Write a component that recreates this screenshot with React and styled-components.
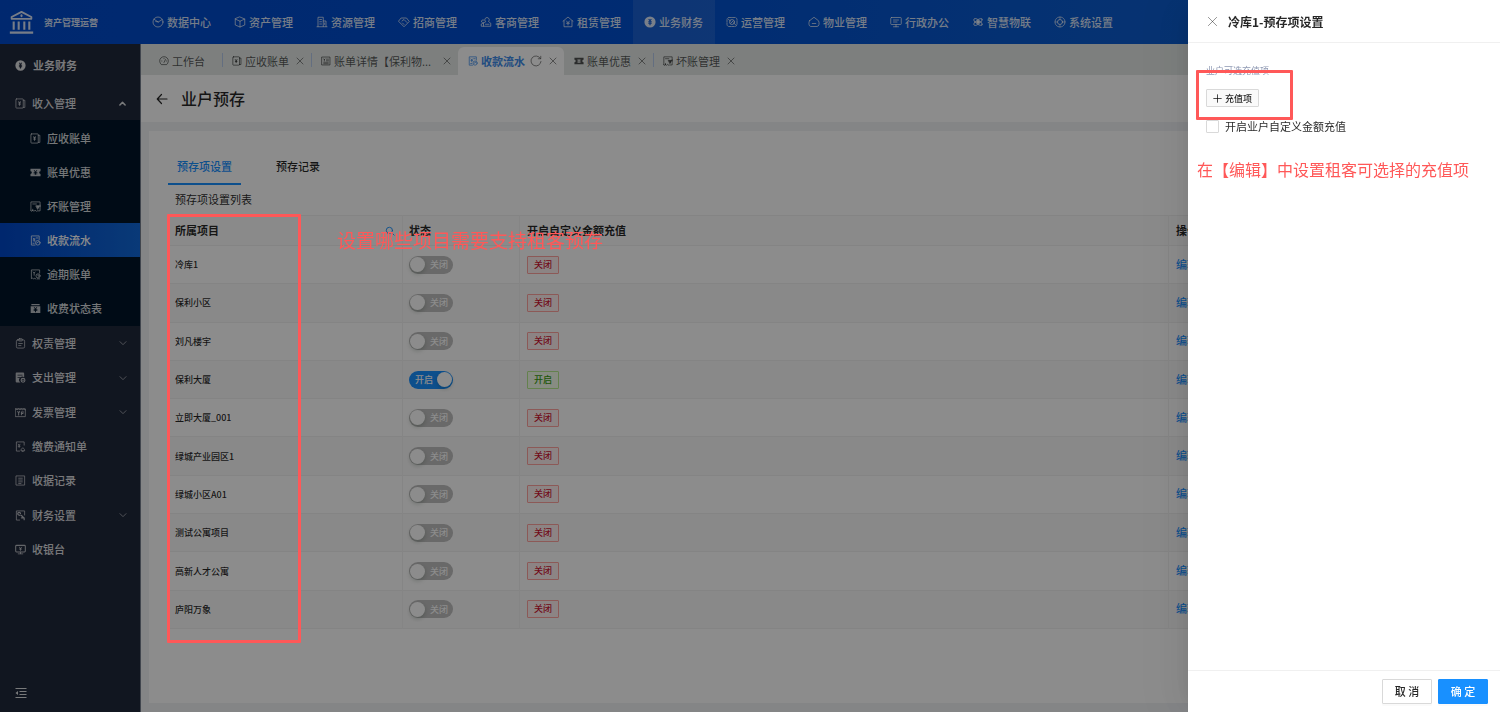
import React from 'react';
import styled, { createGlobalStyle, css } from 'styled-components';

const GlobalStyle = createGlobalStyle`
  *, *::before, *::after { box-sizing: border-box; }
  body {
    margin: 0;
    font-family: "Noto Sans CJK SC", "Noto Sans", sans-serif;
    font-size: 11px;
    line-height: 15px;
    color: rgba(0, 0, 0, 0.85);
    background: #f0f2f5;
    overflow: hidden;
  }
  button, input { font: inherit; color: inherit; margin: 0; }
  button { border: 0; padding: 0; background: none; cursor: pointer; }
  a { color: inherit; text-decoration: none; }
  ul { list-style: none; margin: 0; padding: 0; }
  h1, h2, p { margin: 0; font-weight: inherit; font-size: inherit; }
`;

/* ---------- icons ---------- */

const IconSvg = styled.svg`
  flex: none;
  display: block;
  width: ${(p) => p.$size}px;
  height: ${(p) => p.$size}px;
  fill: none;
  stroke: currentColor;
  stroke-width: ${(p) => p.$weight};
  stroke-linecap: round;
  stroke-linejoin: round;
  opacity: ${(p) => p.$opacity};
`;

const glyphs = {
  bank: (
    <>
      <path d="M2.500 8.500V6.800L12 1.800l9.500 5v1.700z" strokeWidth="1.700" />
      <path d="M12 5v1" strokeWidth="1.800" />
      <path d="M4.500 11v8M9.300 11v8M14.700 11v8M19.500 11v8" strokeWidth="2" strokeLinecap="butt" />
      <path d="M.8 21.700h22.400" strokeWidth="2.200" strokeLinecap="butt" />
    </>
  ),
  pie: (
    <>
      <circle cx="12" cy="12" r="10" />
      <path d="M4 6.500l8.500 5.500 8-5M12.500 12l-5-1" />
    </>
  ),
  cube: <path d="M12 2l9.500 4v12L12 22l-9.500-4V6zM2.500 6L12 10.500 21.500 6M12 10.500V22" />,
  building: (
    <>
      <path d="M4 21V2.500h10.500V21M14.500 10H20v11M2 21.500h20" />
      <path d="M7.500 7h3.500M7.500 11.500h3.500M7.500 16h3.500M17.300 14v3" />
    </>
  ),
  handshake: (
    <>
      <path d="M7 4h10l5.500 7L12 21.500 1.500 11z" />
      <path d="M8 10l4-3 6 6M9 14l3 3" />
    </>
  ),
  people: (
    <>
      <path d="M11 11a4.500 4.500 0 1 1 6 0l4.500 3.500v6H7v-6z" />
      <path d="M8 8.500a3 3 0 1 0-1 5L2.500 16v4.500H7M11 16.500h7" />
    </>
  ),
  rent: (
    <>
      <path d="M2 10.500L12 2l10 8.500M4 9.500V21.500h16V9.500" />
      <path d="M9 10l3 3.500 3-3.500M12 13.500V18M9 14.500h6" />
    </>
  ),
  coin: (
    <path
      fill="currentColor"
      stroke="none"
      fillRule="evenodd"
      d="M12 .8a11.200 11.200 0 1 1 0 22.400A11.200 11.200 0 0 1 12 .8zM8.500 6l2.300 4.500H8.500v2h2.300v1.200H8.500v2h2.300V18.500h2.400v-2.800h2.300v-2h-2.300v-1.200h2.300v-2h-2.300L15.500 6H13L12 8.500 11 6z"
    />
  ),
  ops: (
    <>
      <rect x="2" y="3" width="20" height="18" rx="4" strokeDasharray="5 2" />
      <circle cx="12" cy="12" r="5" />
      <path d="M5 7l4 3M19 17l-4-3M9.500 14.500l5-5" />
    </>
  ),
  house: (
    <>
      <path d="M3 9.500L12 2.500l9 7c2.500 5 1 11.500-3 11.500H6C2 21 .5 14.500 3 9.500z" />
      <path d="M8.500 15h7" />
    </>
  ),
  board: (
    <>
      <rect x="1.500" y="3" width="21" height="14" rx="1.500" />
      <path d="M7 8h10M7 12h7M12 17v4.500M7 21.500h10" />
    </>
  ),
  atom: (
    <>
      <ellipse cx="12" cy="12" rx="10" ry="4" transform="rotate(35 12 12)" />
      <ellipse cx="12" cy="12" rx="10" ry="4" transform="rotate(-35 12 12)" />
      <circle cx="12" cy="12" r="2.800" fill="currentColor" />
    </>
  ),
  gear: (
    <>
      <circle cx="12" cy="12" r="10" strokeDasharray="3.500 1.700" />
      <circle cx="12" cy="12" r="5" />
      <path d="M12 2.500V7M12 17v4.500M2.500 12H7M17 12h4.500" strokeWidth="1.200" />
    </>
  ),
  receipt: (
    <>
      <rect x="2" y="2" width="16" height="20" rx="1.500" />
      <path d="M18 5h3.500v15.500H18" />
      <path d="M8 8.500l2 2.500 2-2.500M10 11v5M8 13h4" strokeWidth="2.200" />
    </>
  ),
  ticket: (
    <path
      fill="currentColor"
      stroke="none"
      fillRule="evenodd"
      d="M1 4h22v5a3 3 0 0 0 0 6v5H1v-5a3 3 0 0 0 0-6zM8 7l2.800 4H8v1.600h3V14H8v1.600h3V17h2v-1.400h3V14h-3v-1.400h3V11h-2.800L16 7h-2l-2 3-2-3z"
    />
  ),
  bad: (
    <>
      <path d="M22 12V2H2v19M6 21v-3M2 21l2 1.500L6 20l2.500 2.500L11 20l3 2.500" />
      <path d="M22 9v12.500h-6M6 6.500h8" />
      <path d="M13.500 10.500h7l-3.500 7z" fill="currentColor" />
    </>
  ),
  flow: (
    <>
      <path d="M20 10V2H3v20h8M7 7l2 2.500L11 7M9 9.500V14M7 11h4M14 6.500h3M6.500 18H9" />
      <circle cx="17" cy="17" r="5" />
      <path d="M14.500 17.500L19 14.500" />
    </>
  ),
  overdue: (
    <>
      <path d="M21 9V2H3v19l2.500-1.500L8 22l2.500-2 2.500 2M7 6.500l2 2.500 2-2.500M9 9v4.500" />
      <circle cx="17.500" cy="15" r="4.500" />
      <path d="M17.500 13v2.500h2M16 21.500h5" />
    </>
  ),
  status: (
    <path
      fill="currentColor"
      stroke="none"
      fillRule="evenodd"
      d="M3 2h18v3H3zM1.500 7h21v15h-21zM8 9l2.700 4H8v1.500h3V16H8v1.500h3V20h2v-2.500h3V16h-3v-1.500h3V13h-2.700L16 9h-2.300L12 12l-1.700-3z"
    />
  ),
  clipboard: (
    <>
      <rect x="3" y="4" width="18" height="18" rx="3" />
      <rect x="8" y="1.500" width="8" height="5" rx="1.500" />
      <path d="M8 12h8M8 16.500h5" />
    </>
  ),
  expense: (
    <>
      <path
        fill="currentColor"
        stroke="none"
        fillRule="evenodd"
        d="M4 1h14a2 2 0 0 1 2 2v8.500a6.500 6.500 0 0 0-8 11.500H4a2.500 2.500 0 0 1-2.500-2.500V3A2 2 0 0 1 4 1zM5.500 6v1.800h11V6zM5.500 11v1.800h6V11z"
      />
      <circle cx="17.500" cy="18" r="4.200" strokeWidth="2.400" />
      <path d="M15.500 18h4" />
    </>
  ),
  invoice: (
    <>
      <path d="M1.500 4h21v17h-21zM1.500 4l3 2 3-2 3 2 3-2 3 2 3-2 3 2" />
      <path d="M6 10l2 2.500 2-2.500M8 12.500v5M14 17v-6h4.500M14 14h3.500" strokeWidth="2.200" />
    </>
  ),
  notice: (
    <>
      <path d="M20 9V2H3v20h7M7 7l2 2.500L11 7M9 9.500V14M7 11.500h4" />
      <path d="M13 20.500c0-7 8-7 8 0zM16 22.500h2" />
    </>
  ),
  record: (
    <>
      <path d="M3 2h18v20H3z" />
      <path d="M8 7h8M8 11h8M8 15h8M8 18.500h5" />
    </>
  ),
  finance: (
    <>
      <path d="M21 11V2H3v20h7" />
      <path d="M12 8a3 3 0 1 0-3 3l2 1M14 12l5 5M14 17h6v4" strokeWidth="2.600" />
    </>
  ),
  cashier: (
    <>
      <rect x="1.500" y="3" width="21" height="14.500" rx="2" strokeWidth="2.200" />
      <path d="M9.500 7l2.500 2.500L14.500 7M12 9.500V14M9.500 11h5M7 21.500h10M12 18v3" />
    </>
  ),
  bill: (
    <>
      <path d="M2.500 2.500h19v19h-19z" />
      <path d="M6.500 7l1.500 2 1.500-2M8 9v3M13 7.500h5M13 11.500h5M6.500 15h11M6.500 18.500h11" />
    </>
  ),
  dashboard: (
    <>
      <path d="M5 20a10.500 10.500 0 1 1 14 0z" />
      <path d="M12 15.500l3.500-7M6.500 12h.5M12 6v.5M17.500 12h.5" />
    </>
  ),
  close: <path d="M3 3l18 18M21 3L3 21" />,
  reload: <path d="M20.500 6.500A10 10 0 1 0 22 13M21.500 2.500v5h-5" />,
  back: <path d="M22 12H2.500M11 3L2.500 12l8.500 9" />,
  up: <path d="M5 16l7-7 7 7" />,
  down: <path d="M3 8l9 9 9-9" />,
  search: (
    <>
      <circle cx="10.500" cy="10.500" r="7.500" />
      <path d="M16 16l6 6" />
    </>
  ),
  plus: <path d="M12 2v20M2 12h20" />,
  fold: (
    <>
      <path d="M1 3h22M9 9h14M9 15h14M1 21h22" strokeLinecap="butt" />
      <path d="M1 12l5-4v8z" fill="currentColor" stroke="none" />
    </>
  ),
};

function Icon({ name, size = 11, weight = 1.8, opacity = 1 }) {
  return (
    <IconSvg viewBox="0 0 24 24" $size={size} $weight={weight} $opacity={opacity} aria-hidden="true">
      {glyphs[name]}
    </IconSvg>
  );
}

/* ---------- top bar ---------- */

const Page = styled.div`
  height: 100vh;
  display: flex;
  flex-direction: column;
`;

const TopBar = styled.header`
  flex: none;
  display: flex;
  height: 44px;
  background: linear-gradient(90deg, #004acb 0%, #004fd0 40%, #0b5cd0 75%, #0c5fcb 100%);
  color: rgba(255, 255, 255, 0.85);
`;

const Brand = styled.div`
  flex: none;
  width: 141px;
  display: flex;
  align-items: center;
  gap: 10px;
  padding-left: 9px;
  font-size: 9px;
  font-weight: 700;
`;

const Nav = styled.nav`
  display: flex;
`;

const NavLink = styled.a`
  display: flex;
  align-items: center;
  gap: 3px;
  width: 82px;
  padding-left: 11px;
  font-weight: 500;
  white-space: nowrap;
  background: ${(p) => (p.$active ? 'rgba(255, 255, 255, 0.1)' : 'none')};
`;

/* ---------- side menu ---------- */

const Body = styled.div`
  flex: 1;
  min-height: 0;
  display: flex;
`;

const Side = styled.aside`
  flex: none;
  width: 141px;
  display: flex;
  flex-direction: column;
  background: #20283b;
  border-right: 1px solid #77808f;
  color: rgba(255, 255, 255, 0.85);
  font-weight: 500;
`;

const SideTitle = styled.h2`
  display: flex;
  align-items: center;
  gap: 7px;
  height: 42px;
  padding-left: 15px;
  font-weight: 700;
`;

const MenuRow = styled.a`
  display: flex;
  align-items: center;
  gap: 6px;
  height: ${(p) => (p.$fill ? '100%' : '34px')};
  padding: 0 13px 0 ${(p) => (p.$nested ? 30 : 15)}px;
  ${(p) =>
    p.$active &&
    css`
      color: #fff;
      background: linear-gradient(90deg, #0047c8, #1169da);
    `}
`;

const MenuText = styled.span`
  flex: 1;
`;

const SubMenu = styled.ul`
  padding: 1px 0;
  background: #001529;
`;

const MenuGroup = styled.ul`
  display: grid;
  grid-auto-rows: 1fr;
  min-height: 241px;
`;

const Fold = styled.button`
  margin: auto 0 13px 15px;
  width: 13px;
  height: 13px;
`;

/* ---------- page tabs ---------- */

const Main = styled.main`
  flex: 1;
  min-width: 0;
  display: flex;
  flex-direction: column;
`;

const TabBar = styled.div`
  flex: none;
  display: flex;
  align-items: flex-end;
  height: 31px;
  padding-left: 8px;
  background: #e3e8e6;
`;

const Tab = styled.div`
  position: relative;
  display: flex;
  align-items: center;
  gap: 4px;
  height: 28px;
  padding: 0 ${(p) => (p.$home ? 17 : 7)}px 0 9px;
  color: rgba(0, 0, 0, 0.65);
  white-space: nowrap;
  border-left: 1px solid transparent;
  ${(p) =>
    p.$divided &&
    css`
      border-image: linear-gradient(transparent 22%, #b5c9ea 22%, #b5c9ea 70%, transparent 70%) 1;
    `}
  ${(p) =>
    p.$active &&
    css`
      color: #3d8bea;
      font-weight: 700;
      background: #fff;
      border-radius: 6px 6px 0 0;
    `}
`;

const TabLink = styled.a`
  display: flex;
  align-items: center;
  gap: 3px;
  min-width: ${(p) => (p.$wide ? 115 : 0)}px;
`;

const TabButton = styled.button`
  padding-left: ${(p) => (p.$tight ? 1 : 3)}px;
  color: rgba(0, 0, 0, 0.5);
`;

/* ---------- content ---------- */

const TitleBar = styled.div`
  flex: none;
  display: flex;
  align-items: center;
  gap: 13px;
  height: 47px;
  padding: 0 16px 0 15px;
  background: #fff;
`;

const PageTitle = styled.h1`
  font-size: 16px;
  line-height: 23px;
  font-weight: 500;
`;

const Card = styled.section`
  flex: 1;
  min-height: 0;
  margin: 9px 8px;
  padding: 19px 19px 0;
  background: #fff;
`;

const CardTabs = styled.div`
  display: flex;
  gap: 26px;
`;

const CardTab = styled.button`
  height: 35px;
  padding: 0 9px;
  font-weight: 500;
  color: ${(p) => (p.$active ? '#1890ff' : 'inherit')};
  border-bottom: 2px solid ${(p) => (p.$active ? '#1890ff' : 'transparent')};
`;

const ListTitle = styled.p`
  padding: 7px 7px 8px;
`;

const Table = styled.table`
  width: 100%;
  table-layout: fixed;
  border-collapse: separate;
  border-spacing: 0;
  font-size: 9px;

  thead { height: 31px; }
  tbody { height: 383px; }
  th, td {
    padding: 0 7px;
    text-align: left;
    font-weight: 500;
    border-bottom: 1px solid #f0f0f0;
    border-right: 1px solid #f3f3f3;
  }
  th {
    font-size: 11px;
    font-weight: 700;
    border-top: 1px solid #f0f0f0;
    background: #fcfcfc;
  }
  tbody tr:nth-child(even) { background: #fafafa; }
  th:nth-child(2), td:nth-child(2) { padding-left: 6px; }
`;

const HeadCell = styled.div`
  display: flex;
  align-items: center;
  justify-content: space-between;
`;

const SearchButton = styled.button`
  color: #1890ff;
`;

const ActionLink = styled.a`
  color: #1890ff;
  font-size: 11px;
`;

const SwitchBox = styled.label`
  position: relative;
  display: flex;
  align-items: center;
  flex-direction: ${(p) => (p.$on ? 'row-reverse' : 'row')};
  justify-content: space-between;
  width: 44px;
  height: 18px;
  padding: 0 ${(p) => (p.$on ? '1px 0 6px' : '5px 0 1px')};
  border-radius: 9px;
  color: #fff;
  background: ${(p) => (p.$on ? '#1890ff' : '#bfbfbf')};
  &::before {
    content: '';
    width: 15px;
    height: 15px;
    border-radius: 50%;
    background: #fff;
    box-shadow: 0 2px 4px rgba(0, 35, 11, 0.2);
  }
`;

const SwitchInput = styled.input`
  position: absolute;
  inset: 0;
  opacity: 0;
`;

const Tag = styled.span`
  display: inline-block;
  padding: 0 6px;
  line-height: 16px;
  border: 1px solid ${(p) => (p.$on ? '#b7eb8f' : '#ffa39e')};
  border-radius: 1px;
  color: ${(p) => (p.$on ? '#389e0d' : '#cf1330')};
  background: ${(p) => (p.$on ? '#f6ffed' : '#fff1f0')};
`;

/* ---------- drawer ---------- */

const Mask = styled.div`
  position: fixed;
  inset: 0;
  background: rgba(0, 0, 0, 0.45);
`;

const Drawer = styled.aside`
  position: fixed;
  top: 0;
  right: 0;
  bottom: 0;
  width: 312px;
  display: flex;
  flex-direction: column;
  background: #fff;
  box-shadow: -6px 0 16px -8px rgba(0, 0, 0, 0.08), -9px 0 28px 0 rgba(0, 0, 0, 0.05),
    -12px 0 48px 16px rgba(0, 0, 0, 0.03);
`;

const DrawerHead = styled.header`
  display: flex;
  align-items: center;
  gap: 10px;
  height: 43px;
  padding: 0 19px;
  border-bottom: 1px solid #f0f0f0;
  color: rgba(0, 0, 0, 0.85);
`;

const DrawerClose = styled.button`
  color: rgba(0, 0, 0, 0.5);
`;

const DrawerTitle = styled.h2`
  font-size: 12px;
  font-weight: 700;
`;

const DrawerBody = styled.div`
  flex: 1;
  padding: 20px 18px;
`;

const FieldLabel = styled.p`
  margin-bottom: 11px;
  font-size: 9px;
  color: #8f99b3;
`;

const AddButton = styled.button`
  display: flex;
  align-items: center;
  gap: 3px;
  height: 18px;
  padding: 0 6px;
  border: 1px solid #d9d9d9;
  border-radius: 1px;
  font-size: 9px;
  font-weight: 500;
  background: #fafafa;
`;

const CheckRow = styled.label`
  display: flex;
  align-items: center;
  gap: 6px;
  margin-top: 12px;
`;

const CheckInput = styled.input`
  appearance: none;
  width: 13px;
  height: 13px;
  border: 1px solid #d9d9d9;
  border-radius: 1px;
  background: #fff;
`;

const DrawerFoot = styled.footer`
  display: flex;
  justify-content: flex-end;
  gap: 6px;
  padding: 8px 12px;
  border-top: 1px solid #f0f0f0;
`;

const FootButton = styled.button`
  width: 50px;
  height: 25px;
  border: 1px solid ${(p) => (p.$primary ? '#1890ff' : '#d9d9d9')};
  border-radius: 1px;
  font-weight: 500;
  color: ${(p) => (p.$primary ? '#fff' : 'rgba(0, 0, 0, 0.85)')};
  background: ${(p) => (p.$primary ? '#1890ff' : '#fff')};
  box-shadow: 0 2px 0 rgba(0, 0, 0, 0.02);
`;

/* ---------- guide marks laid over the page ---------- */

const Frame = styled.div`
  position: absolute;
  border: 3px solid #ff5858;
  border-radius: 1px;
  pointer-events: none;
`;

const ListFrame = styled(Frame)`
  left: 167px;
  top: 214px;
  width: 134px;
  height: 429px;
`;

const ButtonFrame = styled(Frame)`
  left: 8px;
  top: 70px;
  width: 97px;
  height: 50px;
`;

const Hint = styled.p`
  position: absolute;
  color: #ff5858;
  font-weight: 400;
  white-space: nowrap;
  line-height: 24px;
  pointer-events: none;
`;

const ListHint = styled(Hint)`
  left: 337px;
  top: 228px;
  font-size: 19px;
`;

const DrawerHint = styled(Hint)`
  left: 9px;
  top: 157px;
  font-size: 16px;
`;

/* ---------- data ---------- */

const navItems = [
  ['数据中心', 'pie'],
  ['资产管理', 'cube'],
  ['资源管理', 'building'],
  ['招商管理', 'handshake'],
  ['客商管理', 'people'],
  ['租赁管理', 'rent'],
  ['业务财务', 'coin'],
  ['运营管理', 'ops'],
  ['物业管理', 'house'],
  ['行政办公', 'board'],
  ['智慧物联', 'atom'],
  ['系统设置', 'gear'],
];

const incomeItems = [
  ['应收账单', 'receipt'],
  ['账单优惠', 'ticket'],
  ['坏账管理', 'bad'],
  ['收款流水', 'flow'],
  ['逾期账单', 'overdue'],
  ['收费状态表', 'status'],
];

const menuItems = [
  ['权责管理', 'clipboard', true],
  ['支出管理', 'expense', true],
  ['发票管理', 'invoice', true],
  ['缴费通知单', 'notice', false],
  ['收据记录', 'record', false],
  ['财务设置', 'finance', true],
  ['收银台', 'cashier', false],
];

const pageTabs = [
  { text: '工作台', icon: 'dashboard', home: true },
  { text: '应收账单', icon: 'receipt', divided: true },
  { text: '账单详情【保利物...', icon: 'bill', divided: true, wide: true },
  { text: '收款流水', icon: 'flow', active: true },
  { text: '账单优惠', icon: 'ticket' },
  { text: '坏账管理', icon: 'bad', divided: true },
];

const projects = [
  ['冷库1', false],
  ['保利小区', false],
  ['刘凡楼宇', false],
  ['保利大厦', true],
  ['立即大厦_001', false],
  ['绿城产业园区1', false],
  ['绿城小区A01', false],
  ['测试公寓项目', false],
  ['高新人才公寓', false],
  ['庐阳万象', false],
];

function Switch({ on, label }) {
  return (
    <SwitchBox $on={on}>
      <SwitchInput type="checkbox" role="switch" defaultChecked={on} aria-label={label} />
      <span>{on ? '开启' : '关闭'}</span>
    </SwitchBox>
  );
}

export default function App() {
  return (
    <>
      <GlobalStyle />
      <Page>
        <TopBar>
          <Brand>
            <Icon name="bank" size={25} />
            资产管理运营
          </Brand>
          <Nav>
            {navItems.map(([text, icon]) => (
              <NavLink key={text} href="#" $active={icon === 'coin'}>
                <Icon name={icon} size={12} weight={1.6} />
                {text}
              </NavLink>
            ))}
          </Nav>
        </TopBar>
        <Body>
          <Side>
            <SideTitle>
              <Icon name="coin" size={11} />
              业务财务
            </SideTitle>
            <MenuRow href="#">
              <Icon name="receipt" opacity={0.8} />
              <MenuText>收入管理</MenuText>
              <Icon name="up" size={9} weight={4} />
            </MenuRow>
            <SubMenu>
              {incomeItems.map(([text, icon]) => (
                <li key={text}>
                  <MenuRow href="#" $nested $active={icon === 'flow'}>
                    <Icon name={icon} opacity={0.85} />
                    <MenuText>{text}</MenuText>
                  </MenuRow>
                </li>
              ))}
            </SubMenu>
            <MenuGroup>
              {menuItems.map(([text, icon, expandable]) => (
                <li key={text}>
                  <MenuRow href="#" $fill>
                    <Icon name={icon} opacity={0.8} />
                    <MenuText>{text}</MenuText>
                    {expandable && <Icon name="down" size={8} weight={3} opacity={0.6} />}
                  </MenuRow>
                </li>
              ))}
            </MenuGroup>
            <Fold aria-label="收起菜单">
              <Icon name="fold" size={12} weight={2.200} />
            </Fold>
          </Side>
          <Main>
            <TabBar>
              {pageTabs.map((t) => (
                <Tab key={t.text} $home={t.home} $divided={t.divided} $active={t.active}>
                  <TabLink href="#" $wide={t.wide}>
                    <Icon name={t.icon} size={10} />
                    {t.text}
                  </TabLink>
                  {t.active && (
                    <TabButton $tight aria-label="刷新">
                      <Icon name="reload" size={12} />
                    </TabButton>
                  )}
                  {!t.home && (
                    <TabButton aria-label="关闭标签">
                      <Icon name="close" size={8} weight={2.600} />
                    </TabButton>
                  )}
                </Tab>
              ))}
            </TabBar>
            <TitleBar>
              <button aria-label="返回">
                <Icon name="back" size={12} weight={2.400} />
              </button>
              <PageTitle>业户预存</PageTitle>
            </TitleBar>
            <Card>
              <CardTabs>
                <CardTab $active>预存项设置</CardTab>
                <CardTab>预存记录</CardTab>
              </CardTabs>
              <ListTitle>预存项设置列表</ListTitle>
              <Table>
                <colgroup>
                  <col width="235" />
                  <col width="117" />
                  <col />
                  <col width="304" />
                </colgroup>
                <thead>
                  <tr>
                    <th>
                      <HeadCell>
                        所属项目
                        <SearchButton aria-label="搜索">
                          <Icon name="search" size={10} weight={2.200} />
                        </SearchButton>
                      </HeadCell>
                    </th>
                    <th>状态</th>
                    <th>开启自定义金额充值</th>
                    <th>操作</th>
                  </tr>
                </thead>
                <tbody>
                  {projects.map(([name, on]) => (
                    <tr key={name}>
                      <td>{name}</td>
                      <td>
                        <Switch on={on} label={name} />
                      </td>
                      <td>
                        <Tag $on={on}>{on ? '开启' : '关闭'}</Tag>
                      </td>
                      <td>
                        <ActionLink href="#">编辑</ActionLink>
                      </td>
                    </tr>
                  ))}
                </tbody>
              </Table>
            </Card>
          </Main>
        </Body>
      </Page>
      <Mask />
      <ListFrame />
      <ListHint>设置哪些项目需要支持租客预存</ListHint>
      <Drawer role="dialog" aria-labelledby="drawer-title">
        <DrawerHead>
          <DrawerClose aria-label="关闭">
            <Icon name="close" size={11} weight={1.800} />
          </DrawerClose>
          <DrawerTitle id="drawer-title">冷库1-预存项设置</DrawerTitle>
        </DrawerHead>
        <DrawerBody>
          <FieldLabel>业户可选充值项</FieldLabel>
          <AddButton>
            <Icon name="plus" size={9} weight={2.200} />
            充值项
          </AddButton>
          <CheckRow>
            <CheckInput type="checkbox" />
            开启业户自定义金额充值
          </CheckRow>
        </DrawerBody>
        <DrawerFoot>
          <FootButton>取 消</FootButton>
          <FootButton $primary>确 定</FootButton>
        </DrawerFoot>
        <ButtonFrame />
        <DrawerHint>在【编辑】中设置租客可选择的充值项</DrawerHint>
      </Drawer>
    </>
  );
}
